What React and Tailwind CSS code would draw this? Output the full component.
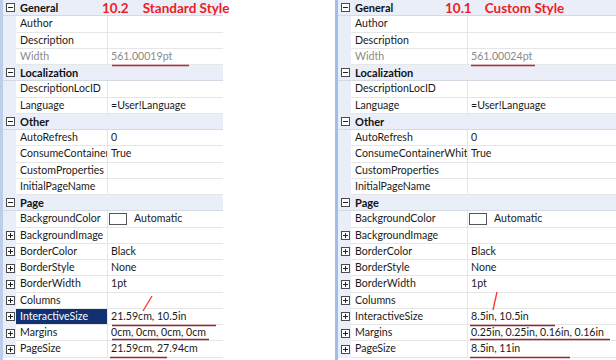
import React from "react";

const rowsLeft = [
  { h: "General" },
  { n: "Author" },
  { n: "Description" },
  { n: "Width", v: "561.00019pt", dim: true },
  { h: "Localization" },
  { n: "DescriptionLocID" },
  { n: "Language", v: "=User!Language" },
  { h: "Other" },
  { n: "AutoRefresh", v: "0" },
  { n: "ConsumeContainerWhitespace", v: "True" },
  { n: "CustomProperties" },
  { n: "InitialPageName" },
  { h: "Page" },
  { n: "BackgroundColor", v: "Automatic", color: true },
  { n: "BackgroundImage", plus: true },
  { n: "BorderColor", v: "Black", plus: true },
  { n: "BorderStyle", v: "None", plus: true },
  { n: "BorderWidth", v: "1pt", plus: true },
  { n: "Columns", plus: true },
  { n: "InteractiveSize", v: "21.59cm, 10.5in", plus: true, sel: true },
  { n: "Margins", v: "0cm, 0cm, 0cm, 0cm", plus: true },
  { n: "PageSize", v: "21.59cm, 27.94cm", plus: true },
];

const rowsRight = rowsLeft.map((r) => {
  const c = { ...r, sel: false };
  if (r.n === "Width") c.v = "561.00024pt";
  if (r.n === "InteractiveSize") c.v = "8.5in, 10.5in";
  if (r.n === "Margins") c.v = "0.25in, 0.25in, 0.16in, 0.16in";
  if (r.n === "PageSize") c.v = "8.5in, 11in";
  return c;
});

function Box({ minus }) {
  return (
    <svg width="9" height="9" viewBox="0 0 9 9" className="block">
      <rect x="0.5" y="0.5" width="8" height="8" fill="#fff" stroke="#4a4a4a" />
      <line x1="2" y1="4.5" x2="7" y2="4.5" stroke="#222" />
      {!minus && <line x1="4.5" y1="2" x2="4.5" y2="7" stroke="#222" />}
    </svg>
  );
}

function Panel({ rows, nameW }) {
  return (
    <div className="flex flex-col h-full">
      {rows.map((r, i) =>
        r.h ? (
          <div key={i} className="flex h-[16.25px] bg-[#e9eef8] border-b border-[#d4d9e2] shrink-0">
            <div className="w-[13px] flex items-center justify-center pl-[1px]">
              <Box minus />
            </div>
            <div className="pl-[4px] font-bold text-[11px] text-[#111] leading-[15px]">{r.h}</div>
          </div>
        ) : (
          <div key={i} className="flex h-[16.25px] shrink-0">
            <div className="w-[13px] bg-[#e9eef8] flex items-center justify-center pl-[1px]">
              {r.plus && <Box />}
            </div>
            <div
              style={{ width: nameW }}
              className={
                "shrink-0 pl-[4px] border-r border-b border-[#e6e6e6] overflow-hidden whitespace-nowrap leading-[15px] " +
                (r.sel ? "bg-[#123172] text-white" : r.dim ? "text-[#8a8a8a]" : "text-[#1a1a1a]")
              }
            >
              {r.n}
            </div>
            <div
              className={
                "flex-1 min-w-0 pl-[3px] border-b border-[#e6e6e6] whitespace-nowrap overflow-hidden leading-[15px] flex items-center gap-[7px] " +
                (r.dim ? "text-[#8a8a8a]" : "text-[#1a1a1a]")
              }
            >
              {r.color && <span className="w-[18px] h-[12px] border border-[#555] bg-white shrink-0 -ml-[2px]" />}
              {r.v}
            </div>
          </div>
        )
      )}
    </div>
  );
}

export default function App() {
  return (
    <div
      className="relative w-[616px] h-[360px] bg-white overflow-hidden flex text-[10.6px]"
      style={{ fontFamily: 'Lato, "Noto Sans", sans-serif' }}
    >
      <div className="w-[223px] h-full border-l-[3px] border-[#bccfea] shrink-0">
        <Panel rows={rowsLeft} nameW={92} />
      </div>
      <div className="w-[112px] shrink-0" />
      <div className="flex-1 h-full border-l-[3px] border-[#9fbde6]">
        <Panel rows={rowsRight} nameW={117} />
      </div>

      {/* titles */}
      <div className="absolute left-[102px] top-[0px] flex gap-[14px] text-[13.5px] font-bold text-[#ee1c25] leading-[17px]">
        <span>10.2</span>
        <span>Standard Style</span>
      </div>
      <div className="absolute left-[445px] top-[0px] flex gap-[13px] text-[13.5px] font-bold text-[#ee1c25] leading-[17px]">
        <span>10.1</span>
        <span>Custom Style</span>
      </div>

      {/* annotation marks */}
      <svg className="absolute left-0 top-0 pointer-events-none" width="616" height="360">
        <g stroke="#c0282d" strokeWidth="1.3" fill="none">
          <line x1="112" y1="65.5" x2="189" y2="65.5" />
          <line x1="471" y1="65.5" x2="535" y2="65.5" />
          <line x1="152" y1="296" x2="143" y2="311" stroke="#ff3030" />
          <line x1="497" y1="292" x2="493" y2="310" stroke="#ff3030" />
        </g>
        <g stroke="#9a2430" strokeWidth="1.3" fill="none">
          <line x1="112" y1="325.5" x2="216" y2="325.5" />
          <line x1="112" y1="339.5" x2="209" y2="339.5" />
          <line x1="110" y1="357.5" x2="167" y2="357.5" />
          <line x1="470" y1="325.5" x2="555" y2="325.5" />
          <line x1="470" y1="339.5" x2="610" y2="339.5" />
          <line x1="470" y1="357.5" x2="570" y2="357.5" />
        </g>
      </svg>
    </div>
  );
}
